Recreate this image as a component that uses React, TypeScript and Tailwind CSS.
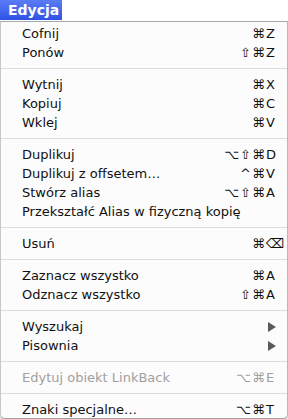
import React from "react";

type Item =
  | { sep: true }
  | { label: string; mods?: string; key?: string; sub?: boolean; disabled?: boolean };

const items: Item[] = [
  { label: "Cofnij", mods: "⌘", key: "Z" },
  { label: "Ponów", mods: "⇧⌘", key: "Z" },
  { sep: true },
  { label: "Wytnij", mods: "⌘", key: "X" },
  { label: "Kopiuj", mods: "⌘", key: "C" },
  { label: "Wklej", mods: "⌘", key: "V" },
  { sep: true },
  { label: "Duplikuj", mods: "⌥⇧⌘", key: "D" },
  { label: "Duplikuj z offsetem…", mods: "^⌘", key: "V" },
  { label: "Stwórz alias", mods: "⌥⇧⌘", key: "A" },
  { label: "Przekształć Alias w fizyczną kopię" },
  { sep: true },
  { label: "Usuń", mods: "⌘", key: "⌫" },
  { sep: true },
  { label: "Zaznacz wszystko", mods: "⌘", key: "A" },
  { label: "Odznacz wszystko", mods: "⇧⌘", key: "A" },
  { sep: true },
  { label: "Wyszukaj", sub: true },
  { label: "Pisownia", sub: true },
  { sep: true },
  { label: "Edytuj obiekt LinkBack", mods: "⌥⌘", key: "E", disabled: true },
  { sep: true },
  { label: "Znaki specjalne…", mods: "⌥⌘", key: "T" },
];

export default function App() {
  return (
    <div
      className="w-[288px] h-[419px] bg-white overflow-hidden text-[13px] leading-[19px]"
      style={{ fontFamily: '"DejaVu Sans", sans-serif' }}
    >
      <div className="h-[21px] flex">
        <div className="w-[62px] h-[20px] bg-gradient-to-b from-[#5b7cf5] to-[#2f51e6] text-white font-bold pl-[8px] leading-[20px] text-[14px]">
          Edycja
        </div>
      </div>
      <div className="h-[398px] border-t border-[#a8a8a8] border-l border-l-[#c8c8c8] border-r border-r-[#b8b8b8] border-b border-b-[#a0a0a0] rounded-b-[5px] bg-[#fcfcfc] pt-[2px] shadow-[0_2px_3px_rgba(0,0,0,0.25)]">
        {items.map((it, i) =>
          "sep" in it ? (
            <div key={i} className="h-[13px] flex items-center">
              <div className="w-full h-px bg-[#dcdcdc]" />
            </div>
          ) : (
            <div
              key={i}
              className={`h-[19px] flex items-center pl-[21px] pr-[8px] ${
                it.disabled ? "text-[#a0a0a0]" : "text-[#111]"
              }`}
            >
              <span className="flex-1 whitespace-nowrap">{it.label}</span>
              {it.sub ? (
                <svg width="8" height="10" viewBox="0 0 8 10" className="mr-[3px]">
                  <path d="M0 0 L8 5 L0 10 Z" fill="#5a5a5a" />
                </svg>
              ) : it.key ? (
                <span className="flex items-center">
                  <span className="text-right tracking-[1px]">{it.mods}</span>
                  <span className="w-[13px] text-left">{it.key}</span>
                </span>
              ) : null}
            </div>
          )
        )}
      </div>
    </div>
  );
}
